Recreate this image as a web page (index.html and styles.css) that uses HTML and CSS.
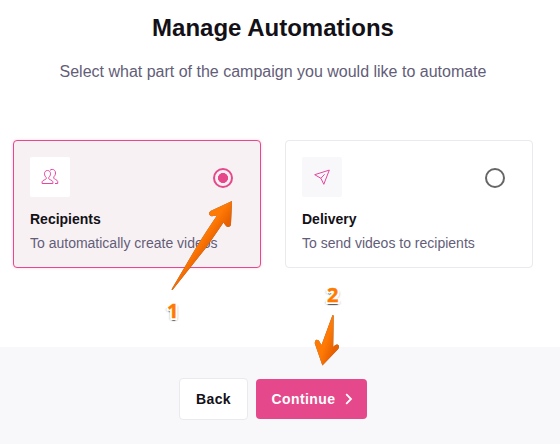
FILE: index.html
```html
<!DOCTYPE html>
<html lang="en">
<head>
  <meta charset="UTF-8" />
  <title>Manage Automations</title>
  <link rel="stylesheet" href="styles.css">
</head>
<body>
  <main class="content">
    <h1>Manage Automations</h1>
    <p class="subtitle">Select what part of the campaign you would like to automate</p>

    <div class="cards">
      <div class="card selected">
        <div class="card-top">
          <div class="icon-box">
            <svg width="18" height="18" viewBox="0 0 18 18" class="icon">
              <path d="M6.500 2.500c-2 0-3 1.400-3 3.300 0 1.500.7 2.800 1.700 3.500v1.500c0 .8-3.700 1.200-4.100 3v1.700h10.800v-1.700c-.4-1.800-4.100-2.200-4.100-3V9.300c1-.7 1.700-2 1.700-3.500 0-1.900-1-3.300-3-3.300z"/>
              <path d="M9 2.300c.6-.6 1.300-.9 2.200-.9 2 0 3.300 1.500 3.300 3.600 0 1.700-.7 3-1.700 3.800v1.500c0 .8 3.500 1.300 3.900 3.200v2h-2.700"/>
            </svg>
          </div>
          <span class="radio"></span>
        </div>
        <h2>Recipients</h2>
        <p>To automatically create videos</p>
      </div>

      <div class="card">
        <div class="card-top">
          <div class="icon-box">
            <svg width="18" height="18" viewBox="0 0 18 18" class="icon">
              <path d="M16.300 2.100L1.700 6.700l6.200 3.600 2.900 6z"/>
              <path d="M7.900 10.300l3.700-4"/>
            </svg>
          </div>
          <span class="radio"></span>
        </div>
        <h2>Delivery</h2>
        <p>To send videos to recipients</p>
      </div>
    </div>
  </main>

  <footer class="footer">
    <button class="btn btn-back">Back</button>
    <button class="btn btn-continue">
      Continue
      <svg width="8" height="12" viewBox="0 0 8 12" class="chevron"><path d="M1.200 1.200L6 6l-4.800 4.800"/></svg>
    </button>
  </footer>

  <!-- Step markers -->
  <svg class="arrows" width="560" height="444" viewBox="0 0 560 444">
    <defs>
      <linearGradient id="arrow-one" gradientUnits="userSpaceOnUse" x1="207" y1="222" x2="221" y2="232">
        <stop offset="0.3" stop-color="#ff7a05"/>
        <stop offset="1" stop-color="#e96000"/>
      </linearGradient>
      <linearGradient id="arrow-two" gradientUnits="userSpaceOnUse" x1="321" y1="341" x2="335" y2="346">
        <stop offset="0.3" stop-color="#ff7a05"/>
        <stop offset="1" stop-color="#e96000"/>
      </linearGradient>
    </defs>
    <path fill="url(#arrow-one)" d="M232 201L210.500 211Q208.500 212.500 209.300 214.500Q210.300 216.800 213 216L217 215.500Q209 227 197 246L171.500 289.500L172.500 290L207 246.500Q217 232 223.500 222.500L225.200 225Q227 227.500 229 226.800Q231 226 231 223.500z"/>
    <path fill="url(#arrow-two)" d="M322.400 365.500L314.800 343.500Q314.500 340.500 316.500 339.800Q319 339.500 320.300 343L321.500 345L332.500 315L333.700 315.500L333.200 347L335 345.200Q337.500 343.500 338.700 345.500Q339.500 347.500 338 349.300z"/>
  </svg>
  <span class="step step-one">1</span>
  <span class="step step-two">2</span>
</body>
</html>
```

FILE: styles.css
```css
:root {
  --pink: #e5498b;
  --text: #131117;
  --muted: #635d78;
  --border: #e9e9ef;
  --bg-soft: #f8f8fb;
}

* {
  box-sizing: border-box;
}

body {
  margin: 0;
  width: 560px;
  height: 444px;
  display: flex;
  flex-direction: column;
  position: relative;
  overflow: hidden;
  font-family: "Liberation Sans", Arial, sans-serif;
  background: #fff;
  color: var(--text);
}

h1, h2, p {
  margin: 0;
}

.content {
  height: 347px;
  padding: 12px 27px 0 13px;
}

h1 {
  font-size: 24px;
  line-height: 32px;
  text-align: center;
}

.subtitle {
  margin-top: 16px;
  font-size: 16px;
  line-height: 24px;
  text-align: center;
  color: var(--muted);
}

.cards {
  display: flex;
  gap: 24px;
  margin-top: 56px;
}

.card {
  width: 248px;
  height: 128px;
  padding: 16px;
  border: 1px solid var(--border);
  border-radius: 4px;
}

.card.selected {
  background: #f8f1f4;
  border-color: var(--pink);
  box-shadow: 0 0 3px rgba(229, 73, 139, 0.25);
}

.card-top {
  display: flex;
  justify-content: space-between;
  align-items: center;
  padding-right: 11px;
}

.icon-box {
  width: 40px;
  height: 40px;
  display: flex;
  align-items: center;
  justify-content: center;
  border-radius: 2px;
  background: var(--bg-soft);
}

.selected .icon-box {
  background: #fff;
}

.icon {
  fill: none;
  stroke: #e645a0;
  stroke-width: 1;
  stroke-linejoin: round;
}

.radio {
  width: 20px;
  height: 20px;
  margin-top: 2px;
  border: 2px solid #666;
  border-radius: 50%;
}

.selected .radio {
  border-color: var(--pink);
  background: radial-gradient(circle, var(--pink) 4.700px, transparent 5.300px);
}

h2 {
  margin-top: 12px;
  font-size: 14px;
  line-height: 20px;
}

.card p {
  margin-top: 4px;
  font-size: 14px;
  line-height: 20px;
  color: var(--muted);
}

.footer {
  flex: 1;
  display: flex;
  justify-content: center;
  align-items: flex-start;
  gap: 8px;
  padding: 31px 14px 0 0;
  background: var(--bg-soft);
}

.btn {
  display: flex;
  align-items: center;
  font-family: inherit;
  font-size: 14px;
  font-weight: bold;
  letter-spacing: 0.4px;
  border: none;
  border-radius: 4px;
}

.btn-back {
  width: 69px;
  height: 42px;
  justify-content: center;
  padding: 0;
  border: 1px solid var(--border);
  background: #fff;
  color: var(--text);
}

.btn-continue {
  width: 111px;
  height: 40px;
  margin-top: 1px;
  justify-content: space-between;
  padding: 0 14px 0 15.500px;
  background: var(--pink);
  color: #fff;
}

.chevron {
  fill: none;
  stroke: #fff;
  stroke-width: 1.800;
}

.arrows {
  position: absolute;
  top: 0;
  left: 0;
  filter: drop-shadow(0 0.5px 0.5px rgba(0, 0, 0, 0.6));
}

.step {
  position: absolute;
  font-family: "Open Sans", sans-serif;
  font-size: 20px;
  font-weight: bold;
  line-height: 24px;
  color: #ff7a00;
  -webkit-text-stroke: 0.4px #ff7a00;
  text-shadow: -1px -1px 0 #fff, 1px -1px 0 #fff, -1px 1px 0 #fff, 1px 1px 0 #fff,
    2px 0 0 #fff, -2px 0 0 #fff, 0 2px 0 #fff, 2px 2px 0 #fff, -2px 2px 0 #fff,
    0 3px 1px rgba(0, 0, 0, 0.6), 2px 2px 2px rgba(0, 0, 0, 0.4), -2px 2px 2px rgba(0, 0, 0, 0.4);
}

.step-one {
  left: 167px;
  top: 299px;
}

.step-two {
  left: 327px;
  top: 283px;
}
```
